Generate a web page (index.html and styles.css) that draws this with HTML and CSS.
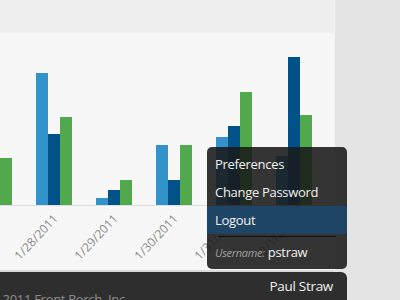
FILE: index.html
```html
<!DOCTYPE html>
<html>
<head>
<meta charset="utf-8">
<link rel="stylesheet" href="styles.css">
</head>
<body>
<div class="page">
  <div class="main">
    <div class="header"></div>
    <div class="panel">
      <div class="plot">
        <div class="group"><div class="bar lb" style="height:60px"></div><div class="bar db" style="height:30px"></div><div class="bar gr" style="height:47px"></div></div>
        <div class="group"><div class="bar lb" style="height:132px"></div><div class="bar db" style="height:71px"></div><div class="bar gr" style="height:88px"></div></div>
        <div class="group"><div class="bar lb" style="height:7px"></div><div class="bar db" style="height:15px"></div><div class="bar gr" style="height:25px"></div></div>
        <div class="group"><div class="bar lb" style="height:60px"></div><div class="bar db" style="height:25px"></div><div class="bar gr" style="height:60px"></div></div>
        <div class="group"><div class="bar lb" style="height:68px"></div><div class="bar db" style="height:79px"></div><div class="bar gr" style="height:113px"></div></div>
        <div class="group"><div class="bar lb" style="height:49px"></div><div class="bar db" style="height:148px"></div><div class="bar gr" style="height:90px"></div></div>
      </div>
      <div class="labels">
        <div class="tick"></div>
        <div class="tick"><span>1/28/2011</span></div>
        <div class="tick"><span>1/29/2011</span></div>
        <div class="tick"><span>1/30/2011</span></div>
        <div class="tick"><span>1/31/2011</span></div>
        <div class="tick"><span>2/1/2011</span></div>
      </div>
    </div>
  </div>
  <div class="footer">
    <div class="copy">© 2011 Front Porch, Inc.</div>
    <div class="user">Paul Straw</div>
  </div>
</div>
<div class="menu">
  <div class="item">Preferences</div>
  <div class="item">Change Password</div>
  <div class="item active">Logout</div>
  <div class="sep"></div>
  <div class="uname"><span class="ulabel">Username:</span> <span class="uval">pstraw</span></div>
</div>
</body>
</html>
```
FILE: styles.css
```css
html, body {
  margin: 0;
  padding: 0;
}
body {
  width: 400px;
  height: 300px;
  overflow: hidden;
  background: #e4e4e4;
  font-family: "Open Sans", "Noto Sans", sans-serif;
  position: relative;
}
.page {
  display: flex;
  flex-direction: column;
  width: 347px;
}
.main {
  width: 334px;
  border-right: 1px solid #f3f3f3;
  overflow: hidden;
}
.header {
  height: 33px;
  background: #eeeeee;
}
.panel {
  height: 237px;
  background: #f7f7f7;
  border-bottom: 2px solid #dadada;
  overflow: hidden;
}
.plot {
  height: 172px;
  display: flex;
  align-items: flex-end;
  gap: 24px;
  margin-left: -24px;
  border-bottom: 1px solid #dedede;
}
.group {
  display: flex;
  align-items: flex-end;
  width: 36px;
  flex: none;
}
.bar {
  width: 12px;
}
.lb { background: #3193c9; }
.db { background: #005288; }
.gr { background: #52a84c; }
.labels {
  display: flex;
  gap: 24px;
  margin-left: -24px;
  margin-top: 5px;
}
.tick {
  width: 14px;
  padding-right: 22px;
  flex: none;
  display: flex;
  justify-content: flex-end;
}
.tick span {
  flex: none;
  white-space: nowrap;
  font-size: 12px;
  line-height: 15px;
  color: #8a8a8a;
  transform-origin: 100% 0;
  transform: rotate(-47deg);
}
.footer {
  height: 28px;
  width: 347px;
  background: #2e2e2e;
  border-top-right-radius: 6px;
  display: flex;
  justify-content: space-between;
  color: #f0f0f0;
  font-size: 13px;
  letter-spacing: -0.3px;
}
.copy {
  padding-top: 18px;
  line-height: 18px;
  margin-left: -11px;
  color: #8c8c8c;
  white-space: nowrap;
}
.user {
  padding-top: 5px;
  padding-right: 14px;
  line-height: 18px;
  font-size: 13.5px;
}
.menu {
  position: absolute;
  left: 207px;
  top: 147px;
  width: 140px;
  height: 122px;
  box-sizing: border-box;
  padding-top: 3px;
  border-radius: 5px;
  background: rgba(25, 25, 25, 0.88);
  color: #f0f0f0;
  font-size: 13px;
  letter-spacing: -0.3px;
}
.item {
  height: 28px;
  line-height: 28px;
  padding-left: 8px;
}
.item.active {
  background: #1f4566;
}
.sep {
  margin: 2px 11px 0;
  height: 1px;
  background: #111;
}
.uname {
  padding-left: 8px;
  margin-top: 5px;
  line-height: 20px;
  white-space: nowrap;
}
.ulabel {
  font-style: italic;
  font-size: 11px;
  color: #a0a0a0;
}
.uval {
  font-size: 13px;
  color: #f0f0f0;
}
```
